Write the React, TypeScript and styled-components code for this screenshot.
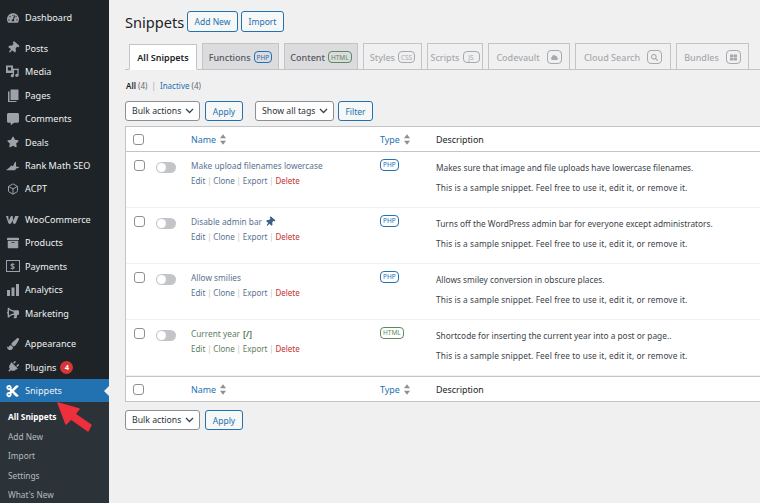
import React from 'react';
import styled, { createGlobalStyle } from 'styled-components';
import { FaTachometerAlt, FaThumbtack, FaStar, FaArchive, FaBullhorn, FaPaintBrush, FaPlug, FaCut, FaCommentAlt, FaCloud, FaSearch, FaThLarge } from 'react-icons/fa';
import { LuBox } from 'react-icons/lu';

const Global = createGlobalStyle`
  html, body { margin: 0; padding: 0; height: 100%; background: #f0f0f1; overflow: hidden; }
  body { font-family: "Noto Sans", "Open Sans", sans-serif; font-size: 9px; color: #3c434a; }
`;

const Shell = styled.div`
  display: flex;
  width: 760px;
  height: 503px;
  overflow: hidden;
`;

const Sidebar = styled.nav`
  position: relative;
  flex: 0 0 109px;
  height: 503px;
  background: #1d2327;
  padding-top: 6px;
  box-sizing: border-box;
`;

const MenuGroup = styled.div`
  margin-bottom: 7.4px;
`;

const MenuItem = styled.div<{ $active?: boolean }>`
  position: relative;
  display: flex;
  align-items: center;
  height: 23.4px;
  padding-left: 6px;
  color: #f0f0f1;
  font-size: 9.1px;
  background: ${p => (p.$active ? '#2271b1' : 'transparent')};
  ${p => p.$active && `
    &::after {
      content: '';
      position: absolute;
      right: 0;
      top: 7px;
      border: 5px solid transparent;
      border-right-color: #f0f0f1;
      border-left-width: 0;
    }
  `}
`;

const IconSlot = styled.span<{ $active?: boolean }>`
  display: flex;
  align-items: center;
  justify-content: center;
  flex: 0 0 13px;
  width: 13px;
  height: 13px;
  margin-right: 6px;
  color: ${p => (p.$active ? '#fff' : '#9ca2a7')};
  font-size: ${p => (p.$active ? 14 : 12)}px;
`;

const Count = styled.span`
  display: inline-flex;
  align-items: center;
  justify-content: center;
  width: 13px;
  height: 13px;
  margin-left: 4px;
  border-radius: 50%;
  background: #d63638;
  color: #fff;
  font-size: 7.5px;
  font-weight: 700;
`;

const SubMenu = styled.div`
  background: #2c3338;
  padding: 5px 0 0 8px;
  height: 100px;
`;

const SubItem = styled.div<{ $current?: boolean }>`
  height: 19.4px;
  line-height: 19.4px;
  font-size: 8.3px;
  color: ${p => (p.$current ? '#fff' : '#b4b9be')};
  font-weight: ${p => (p.$current ? 700 : 400)};
`;

const Arrow = styled.svg`
  position: absolute;
  left: 55px;
  top: 400px;
  width: 40px;
  height: 36px;
`;

const Main = styled.main`
  flex: 1;
  min-width: 0;
  padding-left: 16px;
`;

const TitleRow = styled.header`
  display: flex;
  align-items: center;
  height: 21px;
  padding-top: 11px;
  gap: 3px;
`;

const Title = styled.h1`
  margin: 0;
  width: 59px;
  font-size: 14.6px;
  font-weight: 400;
  color: #1d2327;
  line-height: 22px;
  white-space: nowrap;
`;

const Button = styled.button<{ $w: number }>`
  box-sizing: border-box;
  width: ${p => p.$w}px;
  height: 21px;
  padding: 0;
  background: #f6f7f7;
  border: 1px solid #2271b1;
  border-radius: 3px;
  color: #2271b1;
  font-family: inherit;
  font-size: 8.5px;
`;

const Tabs = styled.div`
  display: flex;
  align-items: flex-end;
  height: 26px;
  margin-top: 11px;
  padding-left: 4px;
  gap: 5px;
  border-bottom: 1px solid #c3c4c7;
`;

const Tab = styled.div<{ $w: number; $kind: 'active' | 'on' | 'off' }>`
  box-sizing: border-box;
  display: flex;
  align-items: center;
  gap: 3px;
  justify-content: center;
  width: ${p => p.$w}px;
  height: 26px;
  padding-top: 1px;
  margin-bottom: ${p => (p.$kind === 'active' ? '-1px' : '0')};
  border: 1px solid #c3c4c7;
  border-bottom: ${p => (p.$kind === 'active' ? '1px solid #fff' : 'none')};
  background: ${p => (p.$kind === 'active' ? '#fff' : p.$kind === 'on' ? '#dcdcde' : 'transparent')};
  color: ${p => (p.$kind === 'active' ? '#1d2327' : p.$kind === 'on' ? '#50575e' : '#a7aaad')};
  font-size: 9px;
  font-weight: ${p => (p.$kind === 'active' ? 600 : 500)};
  white-space: nowrap;
`;

const Badge = styled.span<{ $c: string }>`
  display: inline-flex;
  align-items: center;
  justify-content: center;
  box-sizing: border-box;
  min-width: 17px;
  height: 12px;
  padding: 0 2px;
  border: 1.3px solid ${p => p.$c};
  border-radius: 4px;
  color: ${p => p.$c};
  font-size: 6.5px;
  font-weight: 400;
`;

const IconBadge = styled.span`
  display: inline-flex;
  align-items: center;
  justify-content: center;
  box-sizing: border-box;
  width: 15px;
  height: 14px;
  margin-left: 4px;
  border: 1.3px solid #a7aaad;
  border-radius: 4px;
  color: #a7aaad;
  font-size: 7px;
`;

const SubSub = styled.div`
  height: 31px;
  line-height: 31px;
  padding-left: 1px;
  font-size: 8px;
  color: #646970;
  & b { color: #1d2327; font-weight: 600; }
  & i { font-style: normal; color: #2271b1; }
  & em { font-style: normal; color: #a7aaad; margin: 0 2px; }
`;

const ActionBar = styled.div`
  display: flex;
  align-items: center;
  height: 20px;
  gap: 5px;
`;

const SelectBox = styled.div<{ $w: number; $before?: number; $after?: number }>`
  box-sizing: border-box;
  display: flex;
  align-items: center;
  justify-content: space-between;
  width: ${p => p.$w}px;
  height: 20px;
  padding: 0 5px 0 6px;
  margin-left: ${p => p.$before || 0}px;
  margin-right: ${p => p.$after || 0}px;
  background: #fff;
  border: 1px solid #8c8f94;
  border-radius: 3px;
  color: #2c3338;
  font-size: 8.7px;
  white-space: nowrap;
`;

const SmallButton = styled(Button)`
  height: 20px;
`;

const Table = styled.div`
  margin-top: 5px;
  background: #fff;
  border: 1px solid #c3c4c7;
  border-right: none;
  box-sizing: border-box;
`;

const HeadRow = styled.div<{ $foot?: boolean }>`
  display: grid;
  grid-template-columns: 65px 189px 56px 1fr;
  align-items: center;
  height: 24px;
  ${p => (p.$foot ? 'border-top: 1px solid #c3c4c7;' : 'border-bottom: 1px solid #c3c4c7;')}
  font-size: 8.9px;
`;

const Check = styled.span`
  display: block;
  box-sizing: border-box;
  width: 11px;
  height: 11px;
  background: #fff;
  border: 1px solid #8c8f94;
  border-radius: 3px;
`;

const HeadCheck = styled.div`
  padding-left: 7px;
`;

const SortLink = styled.span`
  display: flex;
  align-items: center;
  gap: 4px;
  color: #2271b1;
`;

const Sort = styled.svg`
  width: 6px;
  height: 11px;
`;

const HeadText = styled.span`
  color: #1d2327;
`;

const Row = styled.div`
  display: grid;
  grid-template-columns: 30px 35px 189px 56px 1fr;
  height: 56px;
  box-sizing: border-box;
  padding-top: 7px;
  border-bottom: 1px solid #f0f0f1;
  &:last-of-type { border-bottom: none; }
`;

const RowCheck = styled.div`
  padding: 1px 0 0 8px;
`;

const Toggle = styled.span`
  display: block;
  position: relative;
  width: 20px;
  height: 11px;
  margin-top: 3px;
  border-radius: 6px;
  background: #c3c4c7;
  &::after {
    content: '';
    position: absolute;
    left: 1px;
    top: 1px;
    width: 9px;
    height: 9px;
    border-radius: 50%;
    background: #fff;
  }
`;

const SnippetName = styled.div<{ $c: string }>`
  display: flex;
  align-items: center;
  gap: 3px;
  height: 13px;
  color: ${p => p.$c};
  font-size: 8.3px;
  white-space: nowrap;
`;

const RowActions = styled.div<{ $c: string }>`
  display: flex;
  align-items: center;
  height: 13px;
  margin-top: 2px;
  color: ${p => p.$c};
  font-size: 8px;
  & i { font-style: normal; color: #c3c4c7; margin: 0 1.8px; }
  & b { font-weight: 400; color: #c9302f; }
`;

const TypeCell = styled.div`
  margin-top: -2px;
`;

const Desc = styled.div`
  color: #3c434a;
  font-size: 8.3px;
  line-height: 20px;
  margin-top: -1px;
  white-space: nowrap;
`;

const Sample = styled.div`
  letter-spacing: 0.1px;
`;

const Footer = styled.div`
  margin-top: 8px;
`;

const PinMark = styled(FaThumbtack)`
  transform: rotate(40deg);
  font-size: 10px;
  color: #3f5f88;
`;

const ic = '#9ca2a7';

const MediaIcon = () => (
  <svg width="14" height="13" viewBox="0 0 14 13" fill={ic}>
    <path fillRule="evenodd" d="M0 0h7.500v8H0zM2 2v3.500h3.500V2z" />
    <rect x="7" y="3.500" width="6.500" height="1.500" />
    <rect x="7.300" y="3.500" width="1.400" height="7.500" />
    <rect x="12.200" y="3.500" width="1.400" height="7" />
    <circle cx="6.800" cy="11" r="1.700" />
    <circle cx="11.700" cy="10.600" r="1.700" />
  </svg>
);
const PagesIcon = () => (
  <svg width="12" height="13" viewBox="0 0 12 13" fill={ic}>
    <rect x="3.500" y="0.500" width="8" height="10.500" />
    <path d="M1 2.500h1.500V12H9.500v1H1z" />
  </svg>
);
const RankIcon = () => (
  <svg width="14" height="11" viewBox="0 0 14 11" fill={ic}>
    <path d="M0 10.500l4-3 1.500-2 2 .8L9.800 1.500l1 .4v4.600l3 .6v1.200l-3 .5-1 1.700z" />
  </svg>
);
const WooIcon = () => (
  <svg width="15" height="10" viewBox="0 0 15 10" fill={ic}>
    <path d="M0 .5h2.600l.6 5.300L5.700.5h2l.5 5.300L10.700.5h4L12 7c-.6 1.500-1.200 2.500-2.300 2.500-1.100 0-1.600-.8-1.700-2l-.3-2.200-1.200 2.600C6 9 5.400 9.500 4.500 9.500 3.200 9.500 2.500 8.600 2.200 7z" />
  </svg>
);
const PayBox = styled.span`
  display: flex;
  flex: 0 0 14px;
  align-items: center;
  justify-content: center;
  box-sizing: border-box;
  width: 14px;
  height: 12px;
  border: 1.500px solid #9ca2a7;
  color: #9ca2a7;
  font-size: 8px;
  font-weight: 700;
`;
const PayIcon = () => <PayBox>$</PayBox>;
const BarsIcon = () => (
  <svg width="12" height="12" viewBox="0 0 12 12" fill={ic}>
    <rect x="0" y="6" width="3" height="6" />
    <rect x="4.500" y="3.500" width="3" height="8.500" />
    <rect x="9" y="0" width="3" height="12" />
  </svg>
);

const Pin = styled(FaThumbtack)`
  transform: rotate(40deg);
`;
const Horn = styled(FaBullhorn)`
  transform: scaleX(-1);
`;
const Plug = styled(FaPlug)`
  transform: rotate(45deg);
`;

type MI = { label: string; icon: React.ReactNode; count?: number; active?: boolean };
const groups: MI[][] = [
  [{ label: 'Dashboard', icon: <FaTachometerAlt /> }],
  [
    { label: 'Posts', icon: <Pin /> },
    { label: 'Media', icon: <MediaIcon /> },
    { label: 'Pages', icon: <PagesIcon /> },
    { label: 'Comments', icon: <FaCommentAlt /> },
    { label: 'Deals', icon: <FaStar /> },
    { label: 'Rank Math SEO', icon: <RankIcon /> },
    { label: 'ACPT', icon: <LuBox /> },
  ],
  [
    { label: 'WooCommerce', icon: <WooIcon /> },
    { label: 'Products', icon: <FaArchive /> },
    { label: 'Payments', icon: <PayIcon /> },
    { label: 'Analytics', icon: <BarsIcon /> },
    { label: 'Marketing', icon: <Horn /> },
  ],
];
const last: MI[] = [
  { label: 'Appearance', icon: <FaPaintBrush /> },
  { label: 'Plugins', icon: <Plug />, count: 4 },
  { label: 'Snippets', icon: <FaCut />, active: true },
];

const PHP = '#2271b1';
const HTML = '#5b8a5f';
const rows = [
  { name: 'Make upload filenames lowercase', c: '#5a7390', type: 'PHP', tc: PHP, d: 'Makes sure that image and file uploads have lowercase filenames.' },
  { name: 'Disable admin bar', pin: true, c: '#5a7390', type: 'PHP', tc: PHP, d: 'Turns off the WordPress admin bar for everyone except administrators.' },
  { name: 'Allow smilies', c: '#5a7390', type: 'PHP', tc: PHP, d: 'Allows smiley conversion in obscure places.' },
  { name: 'Current year', sc: true, c: '#5f8062', type: 'HTML', tc: HTML, d: 'Shortcode for inserting the current year into a post or page..' },
];

const SortIcon = () => (
  <Sort viewBox="0 0 7 12" fill="#8c8f94">
    <path d="M3.500 0L7 4.500H0zM3.500 12L0 7.500h7z" />
  </Sort>
);
const Chevron = () => (
  <svg width="9" height="6" viewBox="0 0 9 6" fill="none" stroke="#3c434a" strokeWidth="1.300">
    <path d="M1 1l3.500 3.500L8 1" />
  </svg>
);
const Head = ({ foot }: { foot?: boolean }) => (
  <HeadRow $foot={foot}>
    <HeadCheck><Check /></HeadCheck>
    <SortLink>Name <SortIcon /></SortLink>
    <SortLink>Type <SortIcon /></SortLink>
    <HeadText>Description</HeadText>
  </HeadRow>
);

export default function App() {
  return (
    <Shell>
      <Global />
      <Sidebar>
        {groups.map((g, i) => (
          <MenuGroup key={i}>
            {g.map(m => (
              <MenuItem key={m.label}>
                <IconSlot>{m.icon}</IconSlot>
                {m.label}
              </MenuItem>
            ))}
          </MenuGroup>
        ))}
        {last.map(m => (
          <MenuItem key={m.label} $active={m.active}>
            <IconSlot $active={m.active}>{m.icon}</IconSlot>
            {m.label}
            {m.count ? <Count>{m.count}</Count> : null}
          </MenuItem>
        ))}
        <SubMenu>
          <SubItem $current>All Snippets</SubItem>
          <SubItem>Add New</SubItem>
          <SubItem>Import</SubItem>
          <SubItem>Settings</SubItem>
          <SubItem>What's New</SubItem>
        </SubMenu>
        <Arrow viewBox="0 0 40 36">
          <path d="M3 3L24 9 20 14 36 25 33 31 16 19 11 24z" fill="#ee2f3c" stroke="#ee2f3c" strokeWidth="1.500" strokeLinejoin="round" />
        </Arrow>
      </Sidebar>
      <Main>
        <TitleRow>
          <Title>Snippets</Title>
          <Button $w={51}>Add New</Button>
          <Button $w={43}>Import</Button>
        </TitleRow>
        <Tabs>
          <Tab $w={68} $kind="active">All Snippets</Tab>
          <Tab $w={77} $kind="on">Functions <Badge $c="#2271b1">PHP</Badge></Tab>
          <Tab $w={74} $kind="on">Content <Badge $c="#5b8a5f">HTML</Badge></Tab>
          <Tab $w={59} $kind="off">Styles <Badge $c="#a7aaad">CSS</Badge></Tab>
          <Tab $w={56} $kind="off">Scripts <Badge $c="#a7aaad">JS</Badge></Tab>
          <Tab $w={82} $kind="off">Codevault <IconBadge><FaCloud /></IconBadge></Tab>
          <Tab $w={96} $kind="off">Cloud Search <IconBadge><FaSearch /></IconBadge></Tab>
          <Tab $w={73} $kind="off">Bundles <IconBadge><FaThLarge /></IconBadge></Tab>
        </Tabs>
        <SubSub><b>All</b> (4) <em>|</em> <i>Inactive</i> (4)</SubSub>
        <ActionBar>
          <SelectBox $w={75}>Bulk actions <Chevron /></SelectBox>
          <SmallButton $w={38}>Apply</SmallButton>
          <SelectBox $w={79} $before={7} $after={-1}>Show all tags <Chevron /></SelectBox>
          <SmallButton $w={35}>Filter</SmallButton>
        </ActionBar>
        <Table>
          <Head />
          {rows.map(r => (
            <Row key={r.name}>
              <RowCheck><Check /></RowCheck>
              <div><Toggle /></div>
              <div>
                <SnippetName $c={r.c}>
                  {r.name}
                  {r.pin ? <PinMark /> : null}
                  {r.sc ? <strong>[/]</strong> : null}
                </SnippetName>
                <RowActions $c={r.c}>Edit<i>|</i>Clone<i>|</i>Export<i>|</i><b>Delete</b></RowActions>
              </div>
              <TypeCell><Badge $c={r.tc}>{r.type}</Badge></TypeCell>
              <Desc>{r.d}<Sample>This is a sample snippet. Feel free to use it, edit it, or remove it.</Sample></Desc>
            </Row>
          ))}
          <Head foot />
        </Table>
        <Footer>
          <ActionBar>
            <SelectBox $w={75}>Bulk actions <Chevron /></SelectBox>
            <SmallButton $w={38}>Apply</SmallButton>
          </ActionBar>
        </Footer>
      </Main>
    </Shell>
  );
}
